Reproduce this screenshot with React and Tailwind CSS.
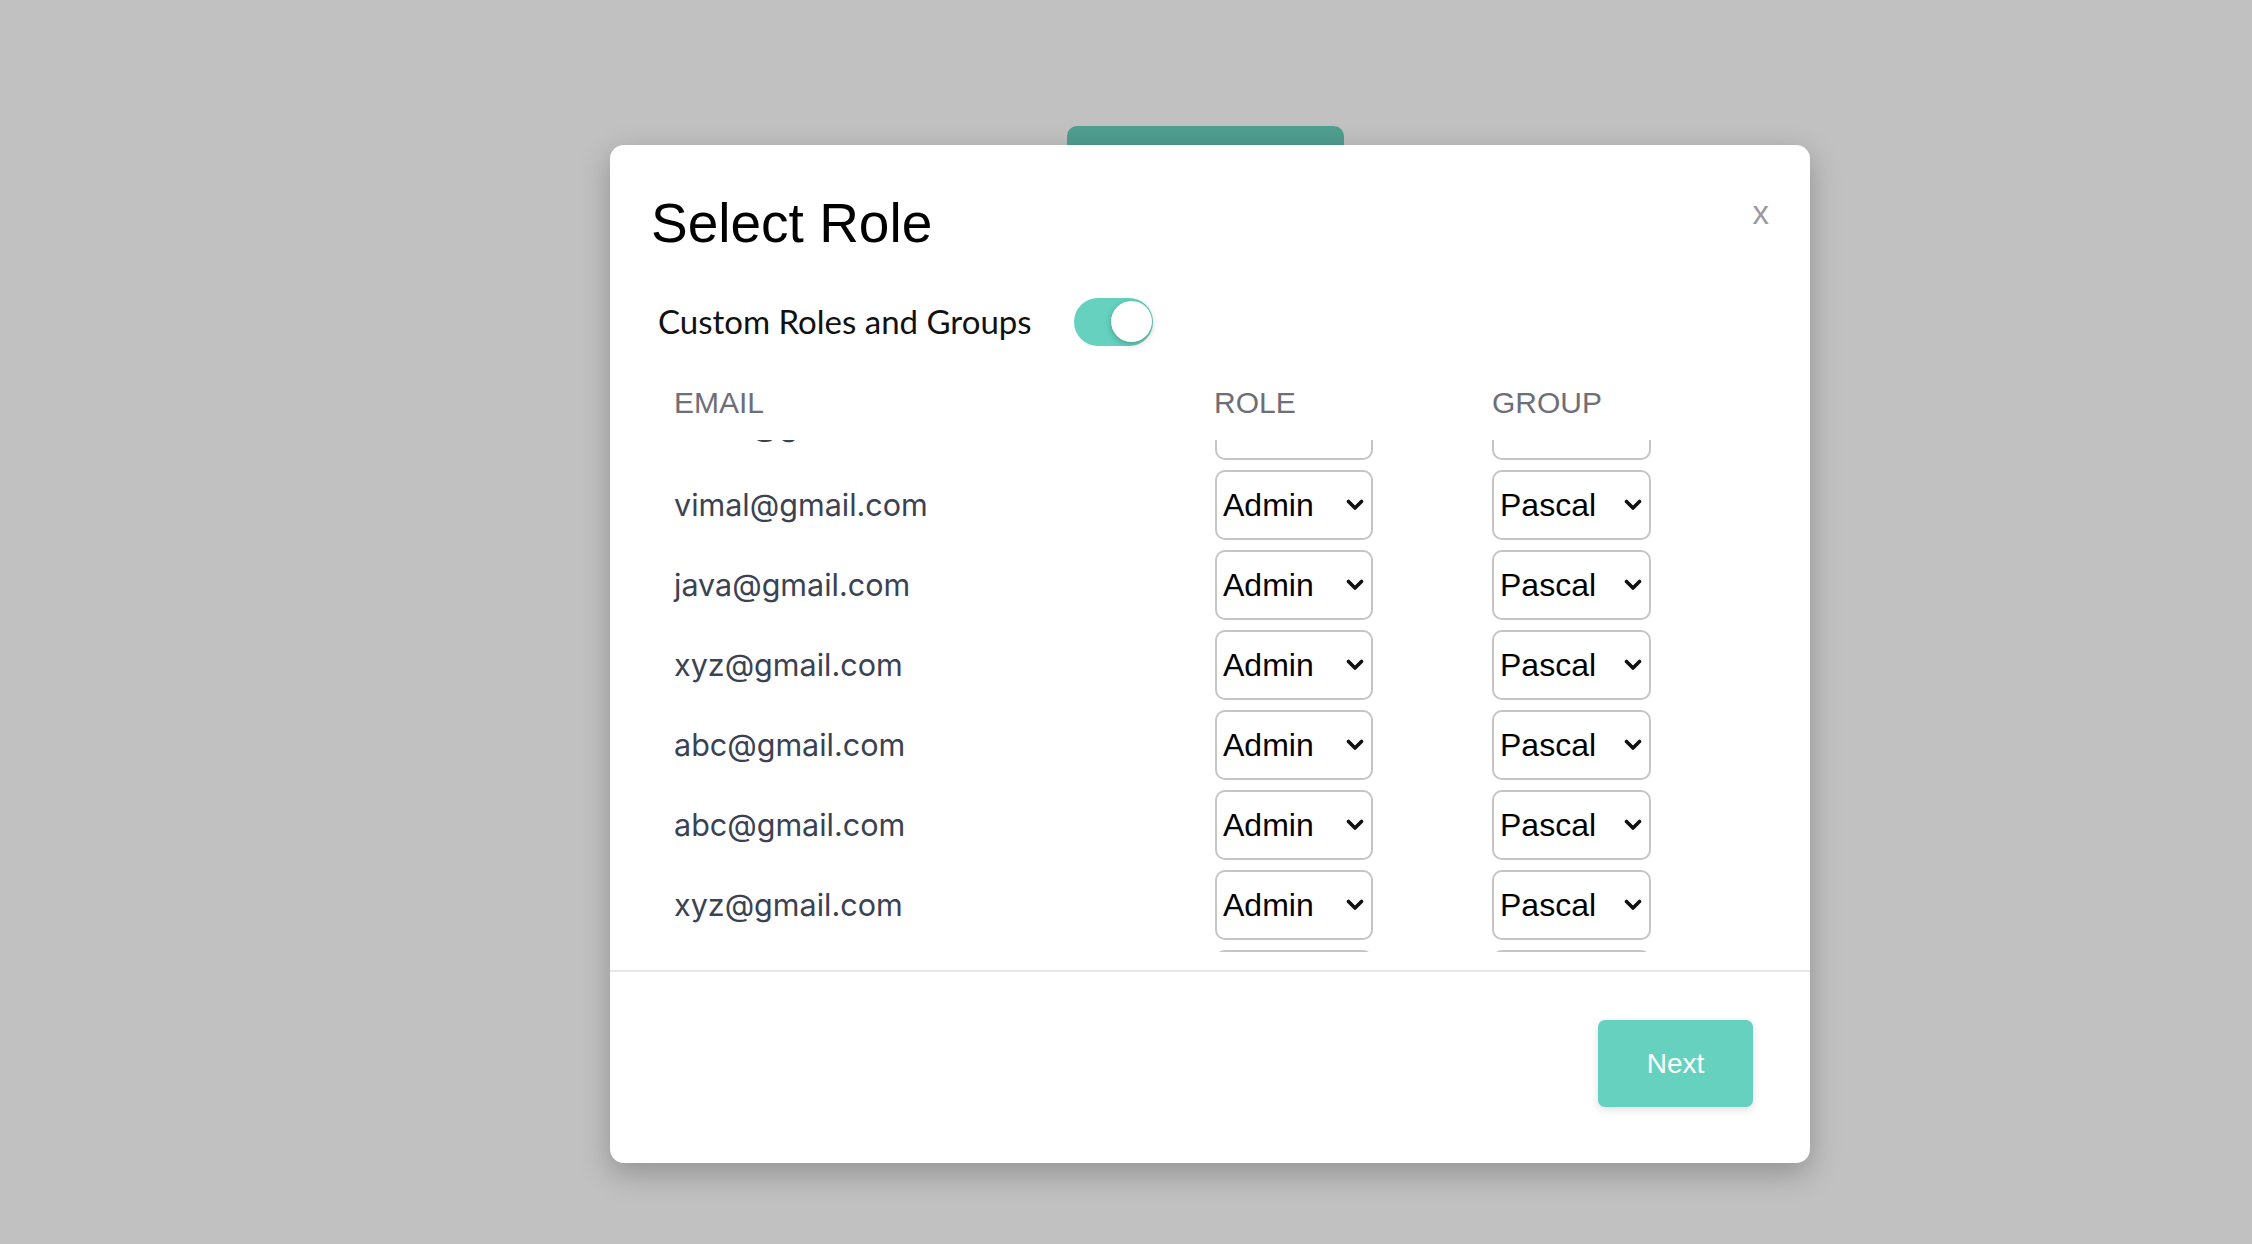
import React from "react";

const rows = [
  "vimal@gmail.com",
  "vimal@gmail.com",
  "java@gmail.com",
  "xyz@gmail.com",
  "abc@gmail.com",
  "abc@gmail.com",
  "xyz@gmail.com",
  "vimal@gmail.com",
];

function Chevron() {
  return (
    <svg width="18" height="12" viewBox="0 0 18 12" fill="none">
      <path d="M2.5 2.5 L9 9 L15.5 2.5" stroke="#111" strokeWidth="3.6" strokeLinecap="round" strokeLinejoin="round" />
    </svg>
  );
}

function FakeSelect({ value, width }) {
  return (
    <div
      className={`flex h-[70px] ${width} items-center justify-between rounded-[10px] border-2 border-[#c6c4c6] bg-white pl-[6px] pr-[7px] text-[32px] leading-none text-black`}
      style={{ fontFamily: '"Liberation Sans", Arial, sans-serif' }}
    >
      <span>{value}</span>
      <Chevron />
    </div>
  );
}

export default function App() {
  return (
    <div className="min-h-screen w-full bg-[#c1c1c1] pl-[610px] pt-[126px]" style={{ height: 1244 }}>
      <div className="ml-[457px] h-[19px] w-[277px] rounded-t-[10px] bg-[#4f9e90]" />
      <div className="flex h-[1018px] w-[1200px] flex-col rounded-[14px] bg-white shadow-[0_10px_30px_rgba(0,0,0,0.25)]">
        {/* header */}
        <div className="flex items-start justify-between pl-[41px] pr-[41px] pt-[51px]">
          <div
            className="h-[55px] text-[55px] leading-none text-black"
            style={{ fontFamily: '"Liberation Sans", Arial, sans-serif' }}
          >
            Select Role
          </div>
          <div
            className="text-[33px] leading-none text-[#9a9aa0]"
            style={{ fontFamily: '"Liberation Sans", Arial, sans-serif' }}
          >
            x
          </div>
        </div>

        {/* toggle row */}
        <div className="mt-[46px] flex h-[49px] items-center pl-[48px]">
          <div
            className="w-[416px] text-[33px] leading-none text-[#111]"
            style={{ fontFamily: 'Lato, "Liberation Sans", sans-serif' }}
          >
            Custom Roles and Groups
          </div>
          <div className="flex h-[48px] w-[79px] items-center justify-end rounded-full bg-[#66d1bf] pr-[1px]">
            <div className="h-[41px] w-[41px] rounded-full bg-white shadow-[0_2px_6px_rgba(0,0,0,0.25)]" />
          </div>
        </div>

        {/* column headers */}
        <div
          className="mt-[42px] grid h-[30px] grid-cols-[540px_278px_1fr] pl-[64px] text-[30px] leading-none text-[#6e6e78]"
          style={{ fontFamily: '"Liberation Sans", Arial, sans-serif' }}
        >
          <div>EMAIL</div>
          <div>ROLE</div>
          <div>GROUP</div>
        </div>

        {/* scroll area */}
        <div className="mt-[22px] h-[512px] overflow-hidden">
          <div className="-mt-[50px] flex flex-col gap-[10px]">
            {rows.map((email, i) => (
              <div key={i} className="grid h-[70px] grid-cols-[541px_277px_1fr] items-center pl-[64px]">
                <div
                  className="text-[30.5px] leading-none text-[#3b4252]"
                  style={{ fontFamily: 'Inter, "Liberation Sans", sans-serif' }}
                >
                  {email}
                </div>
                <FakeSelect value="Admin" width="w-[158px]" />
                <FakeSelect value="Pascal" width="w-[159px]" />
              </div>
            ))}
          </div>
        </div>

        <div className="mt-[18px] h-[2px] w-full bg-[#e6e6eb]" />

        {/* footer */}
        <div className="flex justify-end pb-[56px] pr-[57px] pt-[48px]">
          <button
            className="flex h-[87px] w-[155px] items-center justify-center rounded-[7px] bg-[#66d1bf] text-[28px] leading-none text-white shadow-[0_3px_8px_rgba(0,0,0,0.12)]"
            style={{ fontFamily: '"Liberation Sans", Arial, sans-serif' }}
          >
            Next
          </button>
        </div>
      </div>
    </div>
  );
}
